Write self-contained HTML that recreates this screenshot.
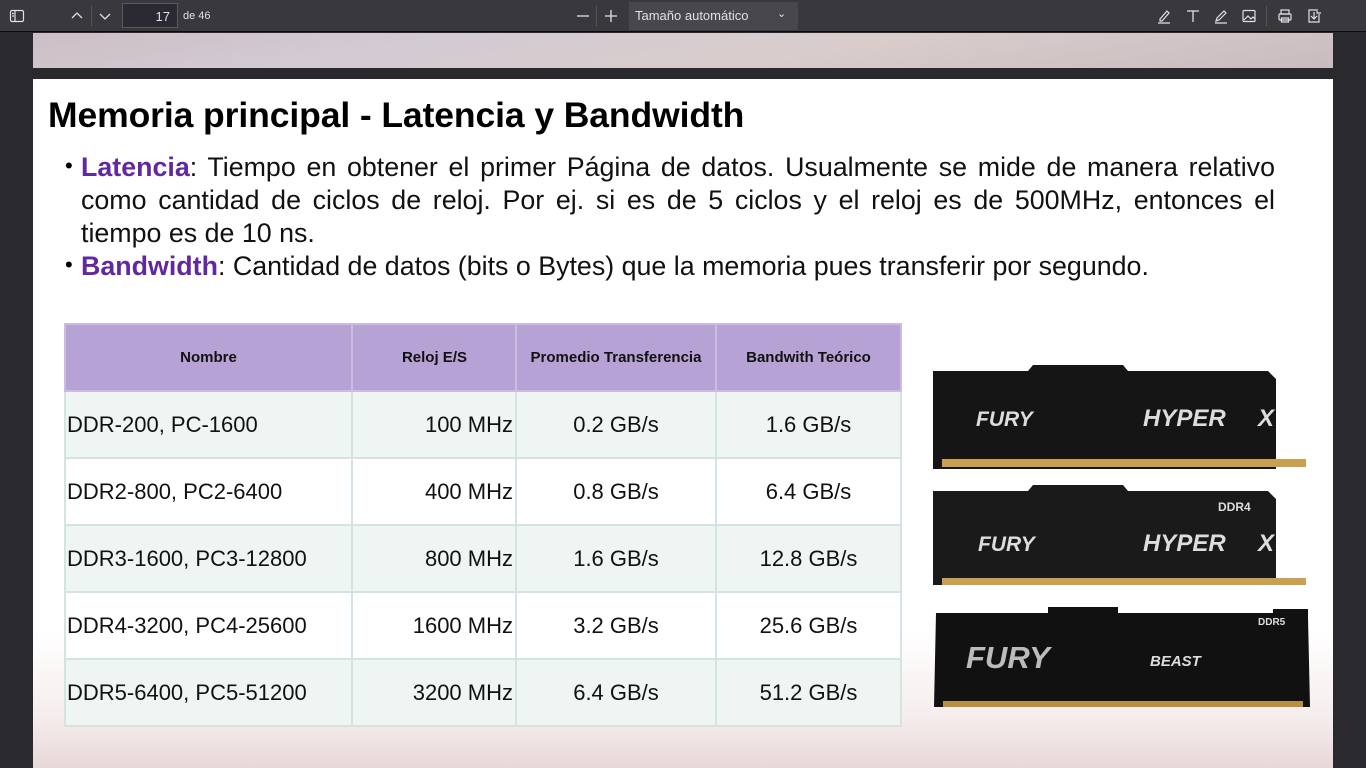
<!DOCTYPE html>
<html><head><meta charset="utf-8"><style>
*{margin:0;padding:0;box-sizing:border-box}
body{width:1366px;height:768px;overflow:hidden;background:#2a2a2e;font-family:"Liberation Sans",sans-serif;position:relative}
.tb{position:absolute;left:0;top:0;width:1366px;height:32px;background:#38383d;border-bottom:1px solid #0c0c0d;color:#e0e0e6;font-size:12px}
.tb .ic{position:absolute;top:8px}
.pg1{position:absolute;left:33px;top:33px;width:1300px;height:35px;background:linear-gradient(170deg,#cdbec4,#d3cbd3 30%,#d9cccb 60%,#c8bcbf)}
.pg{position:absolute;left:33px;top:79px;width:1300px;height:689px;background:linear-gradient(180deg,#fff 0%,#fff 80%,#f6eeee 92%,#e8d8d8 100%)}
h1{position:absolute;left:15px;top:16px;font-size:35.5px;font-weight:bold;color:#000;letter-spacing:-0.1px}
.bl{position:absolute;left:48px;width:1194px;font-size:26.8px;line-height:33px;color:#111;white-space:nowrap}
.bl.j{text-align:justify;text-align-last:justify}
.bl b{color:#6128a0}
.dot{position:absolute;left:32px;font-size:22px}
table{position:absolute;left:31px;top:244px;border-collapse:collapse;font-family:"Liberation Sans",sans-serif}
td,th{border:2px solid #d4e4df;height:67px;font-size:22px;color:#111}
th{background:#b6a2d4;font-size:15px;font-weight:bold;border-color:#c9bde0}
tr:nth-child(even) td{background:#eef5f3}
tr:nth-child(odd) td{background:#fff}
</style></head><body>
<div class="tb">
<svg class="ic" style="left:9px" width="16" height="16" viewBox="0 0 16 16" fill="none" stroke="#e0e0e6" stroke-width="1.2"><rect x="1.5" y="2.5" width="13" height="11" rx="1.5"/><line x1="6" y1="2.5" x2="6" y2="13.5"/><line x1="3" y1="5.5" x2="5" y2="5.5"/><line x1="3" y1="8" x2="5" y2="8"/></svg>
<svg class="ic" style="left:69px" width="16" height="16" viewBox="0 0 16 16" fill="none" stroke="#e0e0e6" stroke-width="1.3"><path d="M3 10l5-5 5 5"/></svg>
<div style="position:absolute;left:91px;top:6px;width:1px;height:20px;background:#555"></div>
<svg class="ic" style="left:97px" width="16" height="16" viewBox="0 0 16 16" fill="none" stroke="#e0e0e6" stroke-width="1.3"><path d="M3 6l5 5 5-5"/></svg>
<div style="position:absolute;left:122px;top:3px;width:56px;height:25px;border:1px solid #5a5a60;background:#2b2a33;text-align:right;padding:5px 7px 0 0;font-size:13px">17</div>
<div style="position:absolute;left:183px;top:10px;font-size:11px">de 46</div>
<svg class="ic" style="left:575px" width="16" height="16" viewBox="0 0 16 16" stroke="#e0e0e6" stroke-width="1.3"><path d="M2 8h12"/></svg>
<div style="position:absolute;left:596px;top:6px;width:1px;height:20px;background:#555"></div>
<svg class="ic" style="left:603px" width="16" height="16" viewBox="0 0 16 16" stroke="#e0e0e6" stroke-width="1.3"><path d="M2 8h12M8 2v12"/></svg>
<div style="position:absolute;left:629px;top:2px;width:169px;height:28px;background:#48474d;padding:6px 0 0 6px;font-size:13px">Tamaño automático<span style="position:absolute;left:148px;top:5px;font-size:11px">⌄</span></div>
<svg class="ic" style="left:1156px" width="16" height="16" viewBox="0 0 16 16" fill="none" stroke="#e0e0e6" stroke-width="1.2"><path d="M4 11l7-8 2 2-7 8H4z M2 15h12"/></svg>
<svg class="ic" style="left:1185px" width="16" height="16" viewBox="0 0 16 16" fill="none" stroke="#e0e0e6" stroke-width="1.3"><path d="M2 3h12M8 3v11"/></svg>
<svg class="ic" style="left:1213px" width="16" height="16" viewBox="0 0 16 16" fill="none" stroke="#e0e0e6" stroke-width="1.2"><path d="M3 13l1-3 7-7 2 2-7 7z M2 15h12"/></svg>
<svg class="ic" style="left:1241px" width="16" height="16" viewBox="0 0 16 16" fill="none" stroke="#e0e0e6" stroke-width="1.2"><rect x="2" y="2.5" width="12" height="11" rx="1"/><path d="M3 12l4-4 3 3 2-2 2 2"/></svg>
<div style="position:absolute;left:1266px;top:6px;width:1px;height:20px;background:#555"></div>
<svg class="ic" style="left:1277px" width="16" height="16" viewBox="0 0 16 16" fill="none" stroke="#e0e0e6" stroke-width="1.2"><rect x="4" y="2" width="8" height="4"/><rect x="2" y="6" width="12" height="6" rx="1"/><rect x="4.5" y="10" width="7" height="4"/></svg>
<svg class="ic" style="left:1306px" width="16" height="16" viewBox="0 0 16 16" fill="none" stroke="#e0e0e6" stroke-width="1.2"><path d="M10 2H3v12h10V6 M8 4v7 M5 8l3 3 3-3 M11 1v4h4"/></svg>
</div>
<div class="pg1"></div>
<div class="pg">
<h1>Memoria principal - Latencia y Bandwidth</h1>
<div class="dot" style="top:74px">•</div>
<div class="bl j" style="top:72px"><b>Latencia</b>: Tiempo en obtener el primer Página de datos. Usualmente se mide de manera relativo</div>
<div class="bl j" style="top:105px">como cantidad de ciclos de reloj. Por ej. si es de 5 ciclos y el reloj es de 500MHz, entonces el</div>
<div class="bl" style="top:138px">tiempo es de 10 ns.</div>
<div class="dot" style="top:173px">•</div>
<div class="bl" style="top:171px"><b>Bandwidth</b>: Cantidad de datos (bits o Bytes) que la memoria pues transferir por segundo.</div>
<table>
<tr><th style="width:287px">Nombre</th><th style="width:164px;text-align:right;padding-right:48px">Reloj E/S</th><th style="width:200px">Promedio Transferencia</th><th style="width:185px">Bandwith Teórico</th></tr>
<tr><td style="padding-left:1px">DDR-200, PC-1600</td><td style="text-align:right;padding-right:2px">100 MHz</td><td style="text-align:center">0.2 GB/s</td><td style="text-align:center">1.6 GB/s</td></tr>
<tr><td style="padding-left:1px">DDR2-800, PC2-6400</td><td style="text-align:right;padding-right:2px">400 MHz</td><td style="text-align:center">0.8 GB/s</td><td style="text-align:center">6.4 GB/s</td></tr>
<tr><td style="padding-left:1px">DDR3-1600, PC3-12800</td><td style="text-align:right;padding-right:2px">800 MHz</td><td style="text-align:center">1.6 GB/s</td><td style="text-align:center">12.8 GB/s</td></tr>
<tr><td style="padding-left:1px">DDR4-3200, PC4-25600</td><td style="text-align:right;padding-right:2px">1600 MHz</td><td style="text-align:center">3.2 GB/s</td><td style="text-align:center">25.6 GB/s</td></tr>
<tr><td style="padding-left:1px">DDR5-6400, PC5-51200</td><td style="text-align:right;padding-right:2px">3200 MHz</td><td style="text-align:center">6.4 GB/s</td><td style="text-align:center">51.2 GB/s</td></tr>
</table>
<svg style="position:absolute;left:895px;top:284px" width="390" height="350" viewBox="0 0 390 350">
<g font-family="Liberation Sans" font-weight="bold" font-style="italic" fill="#ddd">
<path d="M5 8h95l5-6h90l5 6h140l8 8v90H5z" fill="#151515"/>
<rect x="14" y="96" width="364" height="8" fill="#c8a050"/>
<text x="48" y="63" font-size="21">FURY</text><text x="215" y="63" font-size="24">HYPER</text><text x="330" y="63" font-size="24">X</text>
<path d="M5 128h95l5-6h90l5 6h140l8 8v86H5z" fill="#1a1a1a"/>
<rect x="14" y="215" width="364" height="7" fill="#c8a050"/>
<text x="290" y="148" font-size="12" font-style="normal">DDR4</text>
<text x="50" y="188" font-size="21">FURY</text><text x="215" y="188" font-size="24">HYPER</text><text x="330" y="188" font-size="24">X</text>
<path d="M8 250h112v-6h70v6h155v-4h35v8l2 90H6z" fill="#111"/>
<rect x="15" y="338" width="360" height="6" fill="#b89040"/>
<text x="330" y="262" font-size="10" font-style="normal">DDR5</text>
<text x="38" y="305" font-size="31" fill="#bbb">FURY</text>
<text x="222" y="303" font-size="15">BEAST</text>
</g></svg>
</div>
</body></html>
